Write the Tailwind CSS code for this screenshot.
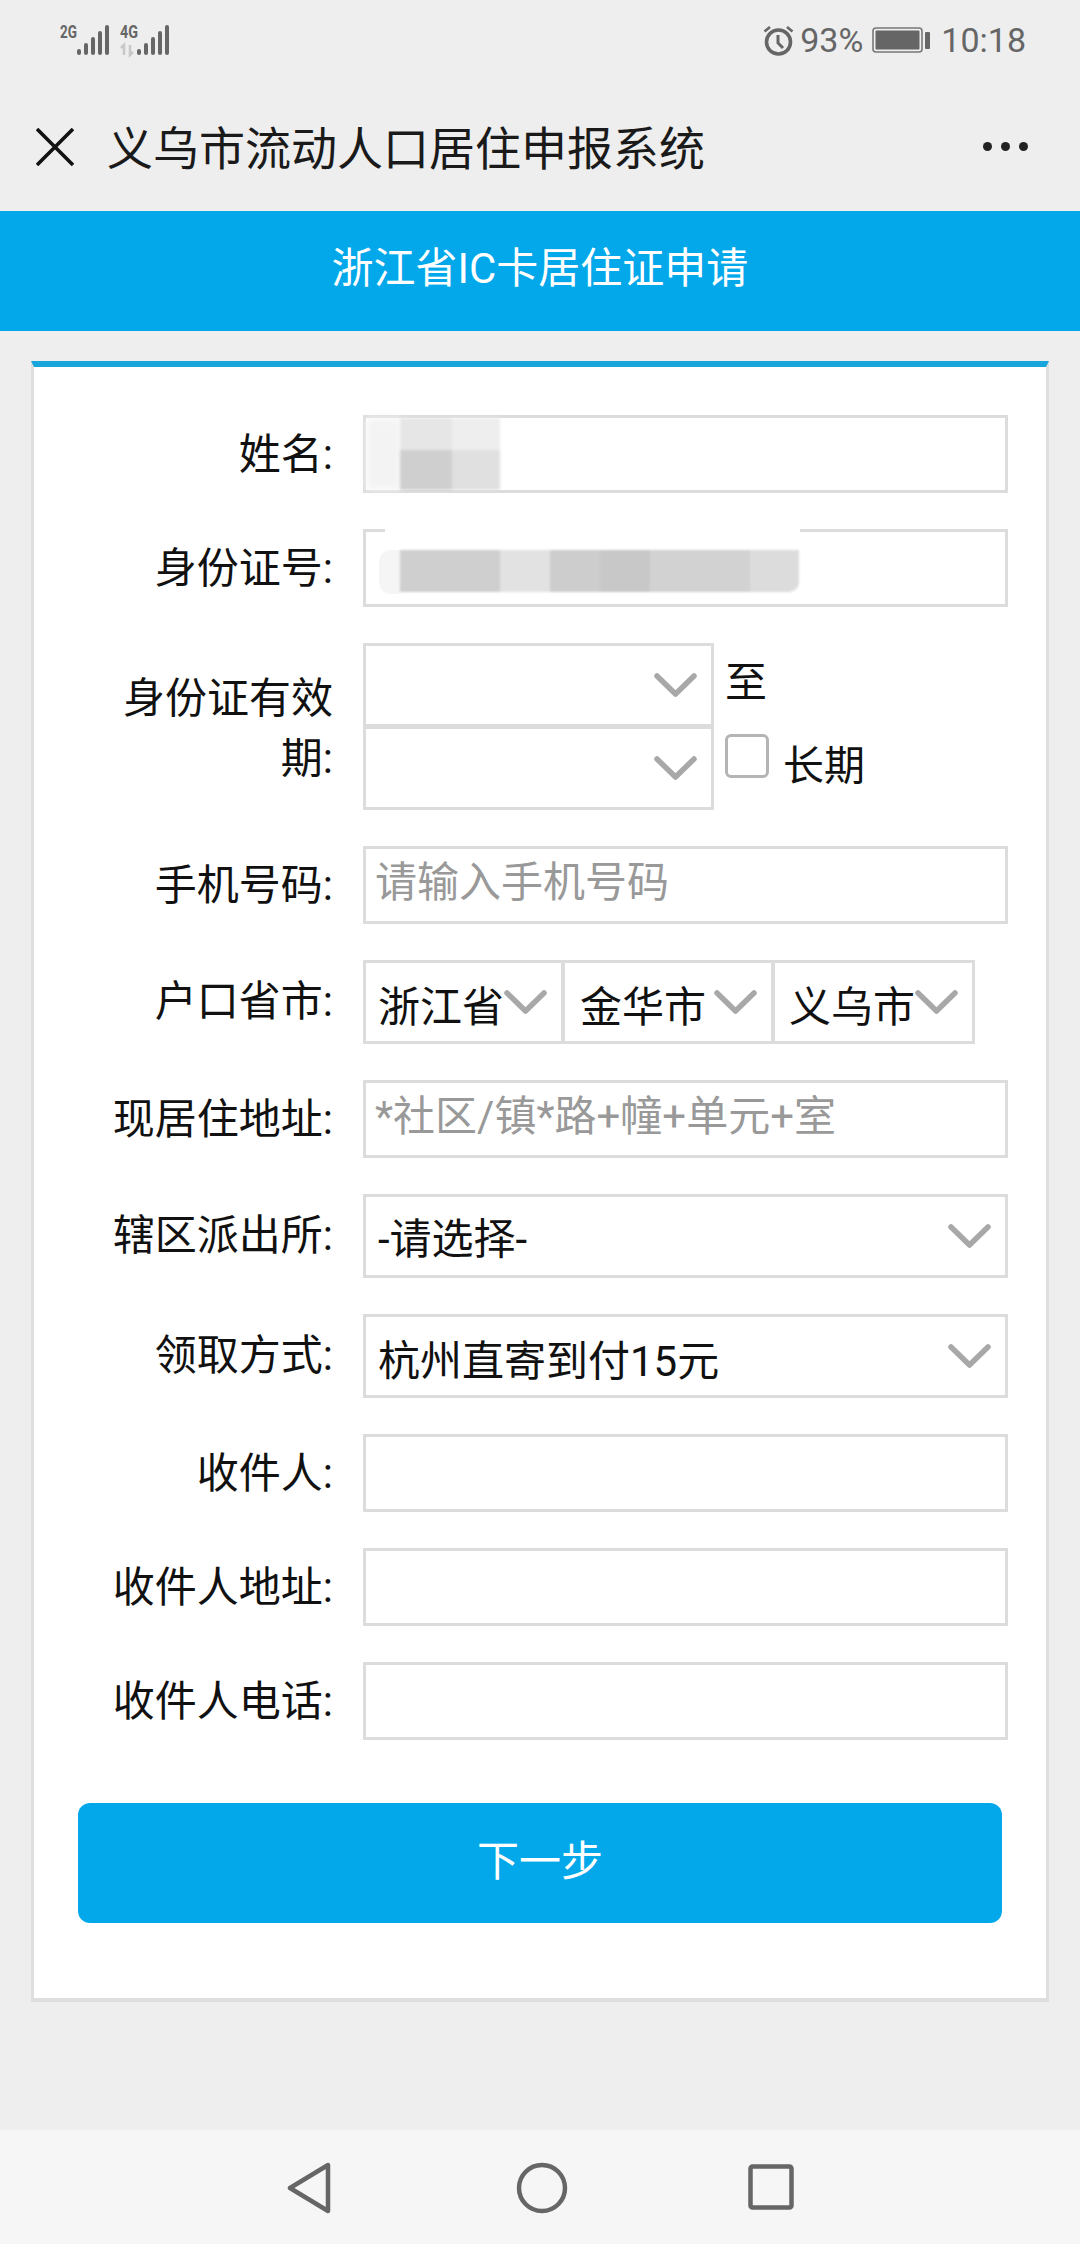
<!DOCTYPE html>
<html lang="zh-CN">
<head>
  <meta charset="utf-8" />
  <meta name="viewport" content="width=device-width, initial-scale=1" />
  <title>浙江省IC卡居住证申请</title>
  <script src="https://cdn.jsdelivr.net/npm/@tailwindcss/browser@4"></script>
</head>
<body class="bg-[#eeeeee] text-[42px] text-[#111] font-['Roboto','Noto_Sans_CJK_SC',sans-serif]">
<div class="w-[1080px] h-[2244px] flex flex-col overflow-hidden">

  <!-- Status bar -->
  <div class="h-[80px] shrink-0 flex justify-between pt-[24px] pl-[60px] pr-[54px] text-[#666]">
    <svg class="w-[112px] h-[32px] overflow-visible" viewBox="0 0 112 32" fill="#666">
      <text x="0" y="14" font-size="18" font-weight="700" font-family="Roboto" textLength="17" lengthAdjust="spacingAndGlyphs">2G</text>
      <rect x="17" y="25" width="4" height="6" rx="2"/><rect x="24" y="19" width="4" height="12" rx="2"/><rect x="31" y="13" width="4" height="18" rx="2"/><rect x="38" y="7" width="4" height="24" rx="2"/><rect x="45" y="1" width="4" height="30" rx="2"/>
      <text x="60" y="14" font-size="18" font-weight="700" font-family="Roboto" textLength="18" lengthAdjust="spacingAndGlyphs">4G</text>
      <path d="M64 31V21l-3 3M70 21v10l3-3" stroke="#c8c8c8" stroke-width="2.5" fill="none"/>
      <rect x="77" y="25" width="4" height="6" rx="2"/><rect x="84" y="19" width="4" height="12" rx="2"/><rect x="91" y="13" width="4" height="18" rx="2"/><rect x="98" y="7" width="4" height="24" rx="2"/><rect x="105" y="1" width="4" height="30" rx="2"/>
    </svg>
    <div class="flex items-center h-[32px] text-[34px] leading-none">
      <svg class="w-[31px] h-[31px]" viewBox="0 0 31 31" fill="none" stroke="#666" stroke-width="3.6">
        <circle cx="15.5" cy="17" r="12"/><path d="M15 10v8l5 5" stroke-width="3"/><path d="M1.5 6.5L7 2M29.5 6.5L24 2" stroke-width="2.6"/>
      </svg>
      <span class="ml-[6px]">93%</span>
      <svg class="ml-[9px] w-[58px] h-[26px]" viewBox="0 0 58 26" fill="#666">
        <rect x="1" y="1" width="49" height="24" rx="3" fill="none" stroke="#777" stroke-width="1.6"/>
        <rect x="3.5" y="3.5" width="44" height="19" rx="1"/>
        <rect x="53" y="5" width="5" height="17" rx="1"/>
      </svg>
      <span class="ml-[11px]">10:18</span>
    </div>
  </div>

  <!-- Title bar -->
  <div class="h-[131px] shrink-0 flex items-center pl-[36px] pr-[52px] pt-[2px]">
    <svg class="w-[38px] h-[38px]" viewBox="0 0 38 38" fill="none" stroke="#111" stroke-width="3.6">
      <path d="M1 1l36 36M37 1L1 37"/>
    </svg>
    <span class="ml-[33px] mt-[4px] text-[46px] leading-none text-[#1a1a1a]">义乌市流动人口居住申报系统</span>
    <div class="ml-auto flex gap-[9px]">
      <span class="w-[9px] h-[9px] rounded-full bg-[#222]"></span>
      <span class="w-[9px] h-[9px] rounded-full bg-[#222]"></span>
      <span class="w-[9px] h-[9px] rounded-full bg-[#222]"></span>
    </div>
  </div>

  <!-- Blue header -->
  <div class="h-[120px] shrink-0 bg-[#02a8ea] flex items-center justify-center pb-[5px] text-white">浙江省IC卡居住证申请</div>

  <!-- Form card -->
  <div class="mt-[30px] ml-[31px] w-[1018px] h-[1641px] shrink-0 bg-white border-x-[3px] border-b-[4px] border-t-[6px] border-x-[#dedede] border-b-[#dedede] border-t-[#18a5dc] pt-[48px] flex flex-col gap-[36px]">

    <div class="flex gap-[30px]">
      <label class="w-[299px] h-[78px] leading-[79px] text-right">姓名:</label>
      <div class="relative w-[645px] h-[78px] border-[3px] border-[#dcdcdc]">
        <div class="absolute left-0 top-0 w-[36px] h-[72px] bg-[#f3f3f3] blur-[5px]"></div>
        <div class="absolute left-[34px] top-0 grid grid-cols-[52px_48px] grid-rows-[32px_40px] blur-[1.5px]">
          <div class="bg-[#e6e6e6]"></div><div class="bg-[#eeeeee]"></div>
          <div class="bg-[#cfcfcf]"></div><div class="bg-[#e0e0e0]"></div>
        </div>
      </div>
    </div>

    <div class="flex gap-[30px]">
      <label class="w-[299px] h-[78px] leading-[79px] text-right">身份证号:</label>
      <div class="relative w-[645px] h-[78px] border-[3px] border-[#dcdcdc]">
        <div class="absolute left-[19px] top-[-3px] w-[415px] h-[3px] bg-white"></div>
        <div class="absolute left-[13px] top-[18px] w-[22px] h-[44px] bg-[#f5f5f5] rounded-l-[12px]"></div>
        <div class="absolute left-[34px] top-[18px] flex h-[42px] blur-[1px]">
          <div class="w-[100px] bg-[#cfcfcf]"></div>
          <div class="w-[50px] bg-[#e2e2e2]"></div>
          <div class="w-[50px] bg-[#cdcdcd]"></div>
          <div class="w-[50px] bg-[#c8c8c8]"></div>
          <div class="w-[100px] bg-[#d2d2d2]"></div>
          <div class="w-[49px] bg-[#dcdcdc] rounded-br-[10px]"></div>
        </div>
      </div>
    </div>

    <div class="flex gap-[30px]">
      <label class="w-[299px] h-[167px] pt-[26px] leading-[60px] text-right">身份证有效<br />期:</label>
      <div class="w-[351px] flex flex-col">
        <div class="h-[84px] border-[3px] border-[#dcdcdc] flex justify-end pr-[14px] pt-[27px]">
          <svg class="w-[43px] h-[24px]" viewBox="0 0 43 24" fill="none" stroke="#a8a8a8" stroke-width="5.5" stroke-linecap="round" stroke-linejoin="round"><path d="M3 3l18.500 18L40 3"/></svg>
        </div>
        <div class="h-[83px] border-[3px] border-t-[2px] border-[#dcdcdc] flex justify-end pr-[14px] pt-[27px]">
          <svg class="w-[43px] h-[24px]" viewBox="0 0 43 24" fill="none" stroke="#a8a8a8" stroke-width="5.5" stroke-linecap="round" stroke-linejoin="round"><path d="M3 3l18.500 18L40 3"/></svg>
        </div>
      </div>
      <div class="-ml-[19px] flex flex-col">
        <span class="h-[84px] pt-[15px] leading-[50px]">至</span>
        <div class="flex items-start">
          <span class="mt-[7px] w-[44px] h-[44px] rounded-[6px] border-[3px] border-[#b4b4b4] bg-white"></span>
          <span class="ml-[14px] mt-[14px] text-[41px] leading-[50px]">长期</span>
        </div>
      </div>
    </div>

    <div class="flex gap-[30px]">
      <label class="w-[299px] h-[78px] leading-[79px] text-right">手机号码:</label>
      <div class="w-[645px] h-[78px] border-[3px] border-[#dcdcdc] pl-[9px] leading-[68px] text-[#999]">请输入手机号码</div>
    </div>

    <div class="flex gap-[30px]">
      <label class="w-[299px] h-[84px] leading-[84px] text-right">户口省市:</label>
      <div class="flex">
        <div class="w-[202px] h-[84px] border-[3px] border-r-[4px] border-[#dcdcdc] pl-[12px] pt-[16px] flex items-start">
          <span class="leading-[58px] whitespace-nowrap shrink-0 w-[126px]">浙江省</span>
          <svg class="mt-[11px] w-[43px] h-[24px]" viewBox="0 0 43 24" fill="none" stroke="#a8a8a8" stroke-width="5.5" stroke-linecap="round" stroke-linejoin="round"><path d="M3 3l18.500 18L40 3"/></svg>
        </div>
        <div class="w-[210px] h-[84px] border-y-[3px] border-r-[4px] border-[#dcdcdc] pl-[15px] pt-[16px] flex items-start">
          <span class="leading-[58px] whitespace-nowrap shrink-0 w-[134px]">金华市</span>
          <svg class="mt-[11px] w-[43px] h-[24px]" viewBox="0 0 43 24" fill="none" stroke="#a8a8a8" stroke-width="5.5" stroke-linecap="round" stroke-linejoin="round"><path d="M3 3l18.500 18L40 3"/></svg>
        </div>
        <div class="w-[200px] h-[84px] border-y-[3px] border-r-[3px] border-[#dcdcdc] pl-[14px] pt-[16px] flex items-start">
          <span class="leading-[58px] whitespace-nowrap shrink-0 w-[126px]">义乌市</span>
          <svg class="mt-[11px] w-[43px] h-[24px]" viewBox="0 0 43 24" fill="none" stroke="#a8a8a8" stroke-width="5.5" stroke-linecap="round" stroke-linejoin="round"><path d="M3 3l18.500 18L40 3"/></svg>
        </div>
      </div>
    </div>

    <div class="flex gap-[30px]">
      <label class="w-[299px] h-[78px] leading-[79px] text-right">现居住地址:</label>
      <div class="w-[645px] h-[78px] border-[3px] border-[#dcdcdc] pl-[9px] leading-[68px] text-[#999]">*社区/镇*路+幢+单元+室</div>
    </div>

    <div class="flex gap-[30px]">
      <label class="w-[299px] h-[84px] leading-[84px] text-right">辖区派出所:</label>
      <div class="w-[645px] h-[84px] border-[3px] border-[#dcdcdc] pl-[12px] pr-[14px] pt-[14px] flex justify-between items-start">
        <span class="leading-[58px]">-请选择-</span>
        <svg class="mt-[13px] w-[43px] h-[24px]" viewBox="0 0 43 24" fill="none" stroke="#a8a8a8" stroke-width="5.5" stroke-linecap="round" stroke-linejoin="round"><path d="M3 3l18.500 18L40 3"/></svg>
      </div>
    </div>

    <div class="flex gap-[30px]">
      <label class="w-[299px] h-[84px] leading-[84px] text-right">领取方式:</label>
      <div class="w-[645px] h-[84px] border-[3px] border-[#dcdcdc] pl-[12px] pr-[14px] pt-[16px] flex justify-between items-start">
        <span class="leading-[58px]">杭州直寄到付15元</span>
        <svg class="mt-[11px] w-[43px] h-[24px]" viewBox="0 0 43 24" fill="none" stroke="#a8a8a8" stroke-width="5.5" stroke-linecap="round" stroke-linejoin="round"><path d="M3 3l18.500 18L40 3"/></svg>
      </div>
    </div>

    <div class="flex gap-[30px]">
      <label class="w-[299px] h-[78px] leading-[79px] text-right">收件人:</label>
      <div class="w-[645px] h-[78px] border-[3px] border-[#dcdcdc]"></div>
    </div>

    <div class="flex gap-[30px]">
      <label class="w-[299px] h-[78px] leading-[79px] text-right">收件人地址:</label>
      <div class="w-[645px] h-[78px] border-[3px] border-[#dcdcdc]"></div>
    </div>

    <div class="flex gap-[30px]">
      <label class="w-[299px] h-[78px] leading-[79px] text-right">收件人电话:</label>
      <div class="w-[645px] h-[78px] border-[3px] border-[#dcdcdc]"></div>
    </div>

    <button class="mt-[27px] ml-[44px] w-[924px] h-[120px] rounded-[12px] bg-[#02a8ea] pb-[3px] text-white">下一步</button>
  </div>

  <!-- Android nav bar -->
  <div class="mt-auto h-[114px] shrink-0 bg-[#f6f6f6] flex items-start justify-center pt-[32px]">
    <svg class="w-[44px] h-[52px]" viewBox="0 0 44 52" fill="none" stroke="#666" stroke-width="4.5" stroke-linejoin="round">
      <path d="M41 3v46L3 26z"/>
    </svg>
    <svg class="ml-[185px] w-[52px] h-[52px]" viewBox="0 0 52 52" fill="none" stroke="#666" stroke-width="4.5">
      <circle cx="26" cy="26" r="23"/>
    </svg>
    <svg class="ml-[180px] mt-[2px] w-[46px] h-[46px]" viewBox="0 0 46 46" fill="none" stroke="#666" stroke-width="4.5" stroke-linejoin="round">
      <rect x="2.500" y="2.500" width="41" height="41" rx="2"/>
    </svg>
  </div>
</div>
</body>
</html>
